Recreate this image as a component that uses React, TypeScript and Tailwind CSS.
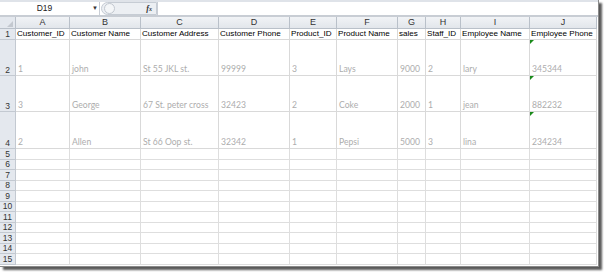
import React from 'react';

const cols = [16, 54, 71, 78, 71, 47, 61, 28, 35, 69, 67];
const letters = ['A', 'B', 'C', 'D', 'E', 'F', 'G', 'H', 'I', 'J'];
const head = ['Customer_ID', 'Customer Name', 'Customer Address', 'Customer Phone', 'Product_ID', 'Product Name', 'sales', 'Staff_ID', 'Employee Name', 'Employee Phone'];
const data = [
  ['1', 'john', 'St 55 JKL st.', '99999', '3', 'Lays', '9000', '2', 'lary', '345344'],
  ['3', 'George', '67 St. peter cross', '32423', '2', 'Coke', '2000', '1', 'jean', '882232'],
  ['2', 'Allen', 'St 66 Oop st.', '32342', '1', 'Pepsi', '5000', '3', 'lina', '234234'],
];
const dataHeights = ['h-[36px]', 'h-[36px]', 'h-[37px]'];
const emptyHeights = ['h-[11px]', 'h-[10px]', 'h-[11px]', 'h-[10px]', 'h-[11px]', 'h-[10px]', 'h-[11px]', 'h-[10px]', 'h-[11px]', 'h-[10px]', 'h-[11px]'];

const arial = { fontFamily: '"Liberation Sans", Arial, sans-serif' };

function RowHead({ n, h }: { n: number; h: string }) {
  return (
    <div className={`${h} flex items-end justify-center border-r border-b border-[#c3c9d1] bg-[#e4e8ee] text-[8.5px] leading-[10px] text-[#333]`} style={arial}>
      {n}
    </div>
  );
}

export default function App() {
  return (
    <div className="w-[604px] h-[272px] bg-white overflow-hidden">
      <div className="w-[599px] h-[267px] bg-white border-r border-b border-[#8a8a8a] shadow-[3px_3px_2px_rgba(0,0,0,0.65)] flex flex-col overflow-hidden">
        {/* formula bar */}
        <div className="h-[2px] bg-[#dfe3e9]" />
        <div className="h-[13px] flex items-stretch bg-white">
          <div className="w-[100px] relative flex items-center justify-center border-r border-[#c9ced6] text-[8.5px] text-[#222]" style={arial}>
            <span className="mr-[10px]">D19</span>
            <span className="absolute right-[1px] top-[3px] text-[6px] leading-[6px] text-[#333]">▼</span>
          </div>
          <div className="w-[56px] flex items-center rounded-l-[7px] border border-[#c6ccd4] bg-[#eceff3] ml-[1px]">
            <div className="ml-[2px] w-[11px] h-[11px] rounded-full border border-[#c2c8d0] bg-[#f4f6f8]" />
            <span className="ml-auto mr-[4px] text-[8px] italic font-bold text-[#333]" style={{ fontFamily: '"Liberation Serif", serif' }}>
              f<span className="text-[6px]">x</span>
            </span>
          </div>
          <div className="flex-1 border-l border-[#c9ced6] bg-white" />
        </div>
        <div className="h-[2px] bg-[#c8cdd4]" />

        {/* sheet */}
        <div className="grid" style={{ gridTemplateColumns: cols.map((c) => c + 'px').join(' ') }}>
          {/* column letters */}
          <div className="h-[12px] border-r border-b border-[#b9c0c9] bg-[#e4e8ee] relative">
            <span className="absolute right-[2px] bottom-[1px] w-0 h-0 border-l-[6px] border-l-transparent border-b-[6px] border-b-[#c3c8cf]" />
          </div>
          {letters.map((l) => (
            <div key={l} className="h-[12px] flex items-center justify-center border-r border-b border-[#b9c0c9] bg-gradient-to-b from-[#f1f3f6] to-[#e2e6eb] text-[9px] text-[#333]" style={arial}>
              {l}
            </div>
          ))}

          {/* row 1 */}
          <RowHead n={1} h="h-[11px]" />
          {head.map((t) => (
            <div key={t} className="h-[11px] flex items-end pl-[1px] border-r border-b border-[#d9d9d9] text-[8.1px] leading-[10px] text-black whitespace-nowrap overflow-hidden" style={arial}>
              {t}
            </div>
          ))}

          {/* data rows */}
          {data.map((r, i) => (
            <React.Fragment key={i}>
              <RowHead n={i + 2} h={dataHeights[i]} />
              {r.map((v, j) => (
                <div key={j} className={`${dataHeights[i]} relative flex items-end pl-[2px] pb-[1px] border-r border-b border-[#d9d9d9] text-[8.6px] leading-[10px] text-[#adadad] whitespace-nowrap overflow-hidden`} style={{ fontFamily: 'Lato, "Open Sans", sans-serif' }}>
                  {j === 9 && <span className="absolute left-0 top-0 w-0 h-0 border-t-[4px] border-t-[#1a8a1a] border-r-[4px] border-r-transparent" />}
                  {v}
                </div>
              ))}
            </React.Fragment>
          ))}

          {/* empty rows */}
          {emptyHeights.map((h, i) => (
            <React.Fragment key={'e' + i}>
              <RowHead n={i + 5} h={h} />
              {letters.map((l) => (
                <div key={l} className={`${h} border-r border-b border-[#dedede]`} />
              ))}
            </React.Fragment>
          ))}
        </div>
      </div>
    </div>
  );
}
